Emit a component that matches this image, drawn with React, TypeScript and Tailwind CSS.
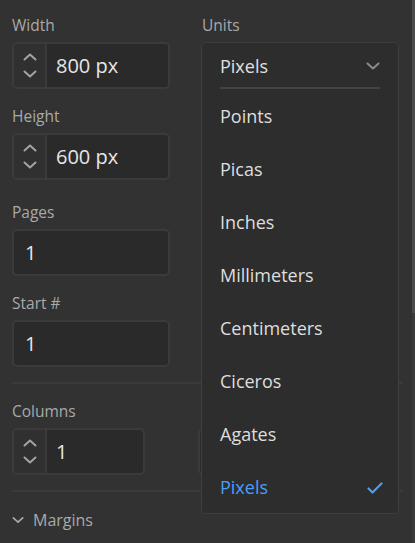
import type { ReactNode } from 'react'

const units = ['Points', 'Picas', 'Inches', 'Millimeters', 'Centimeters', 'Ciceros', 'Agates', 'Pixels']

function Chevron({ up, className }: { up?: boolean; className?: string }) {
  return (
    <svg width="14" height="8" viewBox="0 0 14 8" className={className}>
      <path
        d={up ? 'M1.5 6.5 L7 1.5 L12.5 6.5' : 'M1.5 1.5 L7 6.5 L12.5 1.5'}
        fill="none"
        stroke="currentColor"
        strokeWidth="2"
        strokeLinecap="round"
        strokeLinejoin="round"
      />
    </svg>
  )
}

function Label({ children }: { children?: ReactNode }) {
  return <div className="mb-[7px] h-[22px] pt-[2px] text-[15.5px] leading-5 text-[#a9a9a9]">{children}</div>
}

// numeric field with the up/down stepper on the left
function Stepper({ value, width }: { value: string; width: string }) {
  return (
    <div className={`flex h-[47px] ${width} overflow-hidden rounded-[5px] border-2 border-[#3b3b3b] bg-[#2a2a2a]`}>
      <div className="flex w-[33px] flex-col items-center justify-center gap-[9px] border-r-2 border-[#3b3b3b] bg-[#303030] text-[#a3a3a3]">
        <Chevron up />
        <Chevron />
      </div>
      <div className="flex items-center pl-[9px] text-[20px] text-[#e6e6e6]">{value}</div>
    </div>
  )
}

function Plain({ value }: { value: string }) {
  return (
    <div className="flex h-[47px] w-[158px] items-center rounded-[5px] border-2 border-[#3b3b3b] bg-[#2a2a2a] pl-[11px] text-[20px] text-[#e6e6e6]">
      {value}
    </div>
  )
}

export default function App() {
  return (
    <div className="relative h-[543px] w-[415px] overflow-hidden bg-[#323232] font-['Open_Sans',sans-serif]">
      <div className="px-3 pt-[13px]">
        <div className="flex gap-[32px]">
          <div className="flex w-[158px] flex-col">
            <Label>Width</Label>
            <Stepper value="800 px" width="w-[158px]" />
            <div className="mt-[15px]">
              <Label>Height</Label>
              <Stepper value="600 px" width="w-[158px]" />
            </div>
            <div className="mt-[20px]">
              <Label>Pages</Label>
              <Plain value="1" />
            </div>
            <div className="mt-[15px]">
              <Label>Start #</Label>
              <Plain value="1" />
            </div>
          </div>
          <div className="flex flex-1 flex-col">
            <Label>Units</Label>
          </div>
        </div>

        <div className="mt-[15px] h-[2px] bg-[#3b3b3b]" />

        <div className="mt-[15px] flex gap-[53px]">
          <div>
            <Label>Columns</Label>
            <Stepper value="1" width="w-[133px]" />
          </div>
          <div>
            <Label />
            <div className="h-[47px] w-[150px] rounded-[5px] border-2 border-[#3b3b3b] bg-[#2a2a2a]" />
          </div>
        </div>

        <div className="mt-[15px] h-[2px] bg-[#3b3b3b]" />

        <div className="mt-[18px] flex h-5 items-center gap-[9px] text-[16px] leading-5 text-[#a9a9a9]">
          <Chevron className="w-[12px]" />
          <span>Margins</span>
        </div>
      </div>

      {/* open units menu */}
      <div className="absolute left-[201px] top-[42px] w-[198px] rounded-[5px] border border-[#3e3e3e] bg-[#2d2d2d]">
        <div className="mx-[18px] flex h-[46px] items-center justify-between border-b-2 border-[#444444] pt-[2px] text-[18px] text-[#e0e0e0]">
          <span>Pixels</span>
          <Chevron className="mr-[-1px] w-[16px] text-[#8c8c8c]" />
        </div>
        {units.map((u, i) => {
          const active = i === units.length - 1
          return (
            <div
              key={u}
              className={`flex h-[53px] items-center justify-between pl-[18px] pr-[15px] pt-[2px] text-[18px] ${
                active ? 'text-[#4b9df8]' : 'text-[#dedede]'
              }`}
            >
              <span>{u}</span>
              {active && (
                <svg width="16" height="12" viewBox="0 0 16 12">
                  <path d="M1.5 6.5 L5.5 10.5 L14.5 1.5" fill="none" stroke="#4b9df8" strokeWidth="2.2" strokeLinecap="round" strokeLinejoin="round" />
                </svg>
              )}
            </div>
          )
        })}
      </div>

      {/* scrollbar */}
      <div className="absolute right-0 top-0 h-full w-[3px] bg-[#3a3a3a]">
        <div className="h-[313px] bg-[#4a4a4a]" />
      </div>
    </div>
  )
}
